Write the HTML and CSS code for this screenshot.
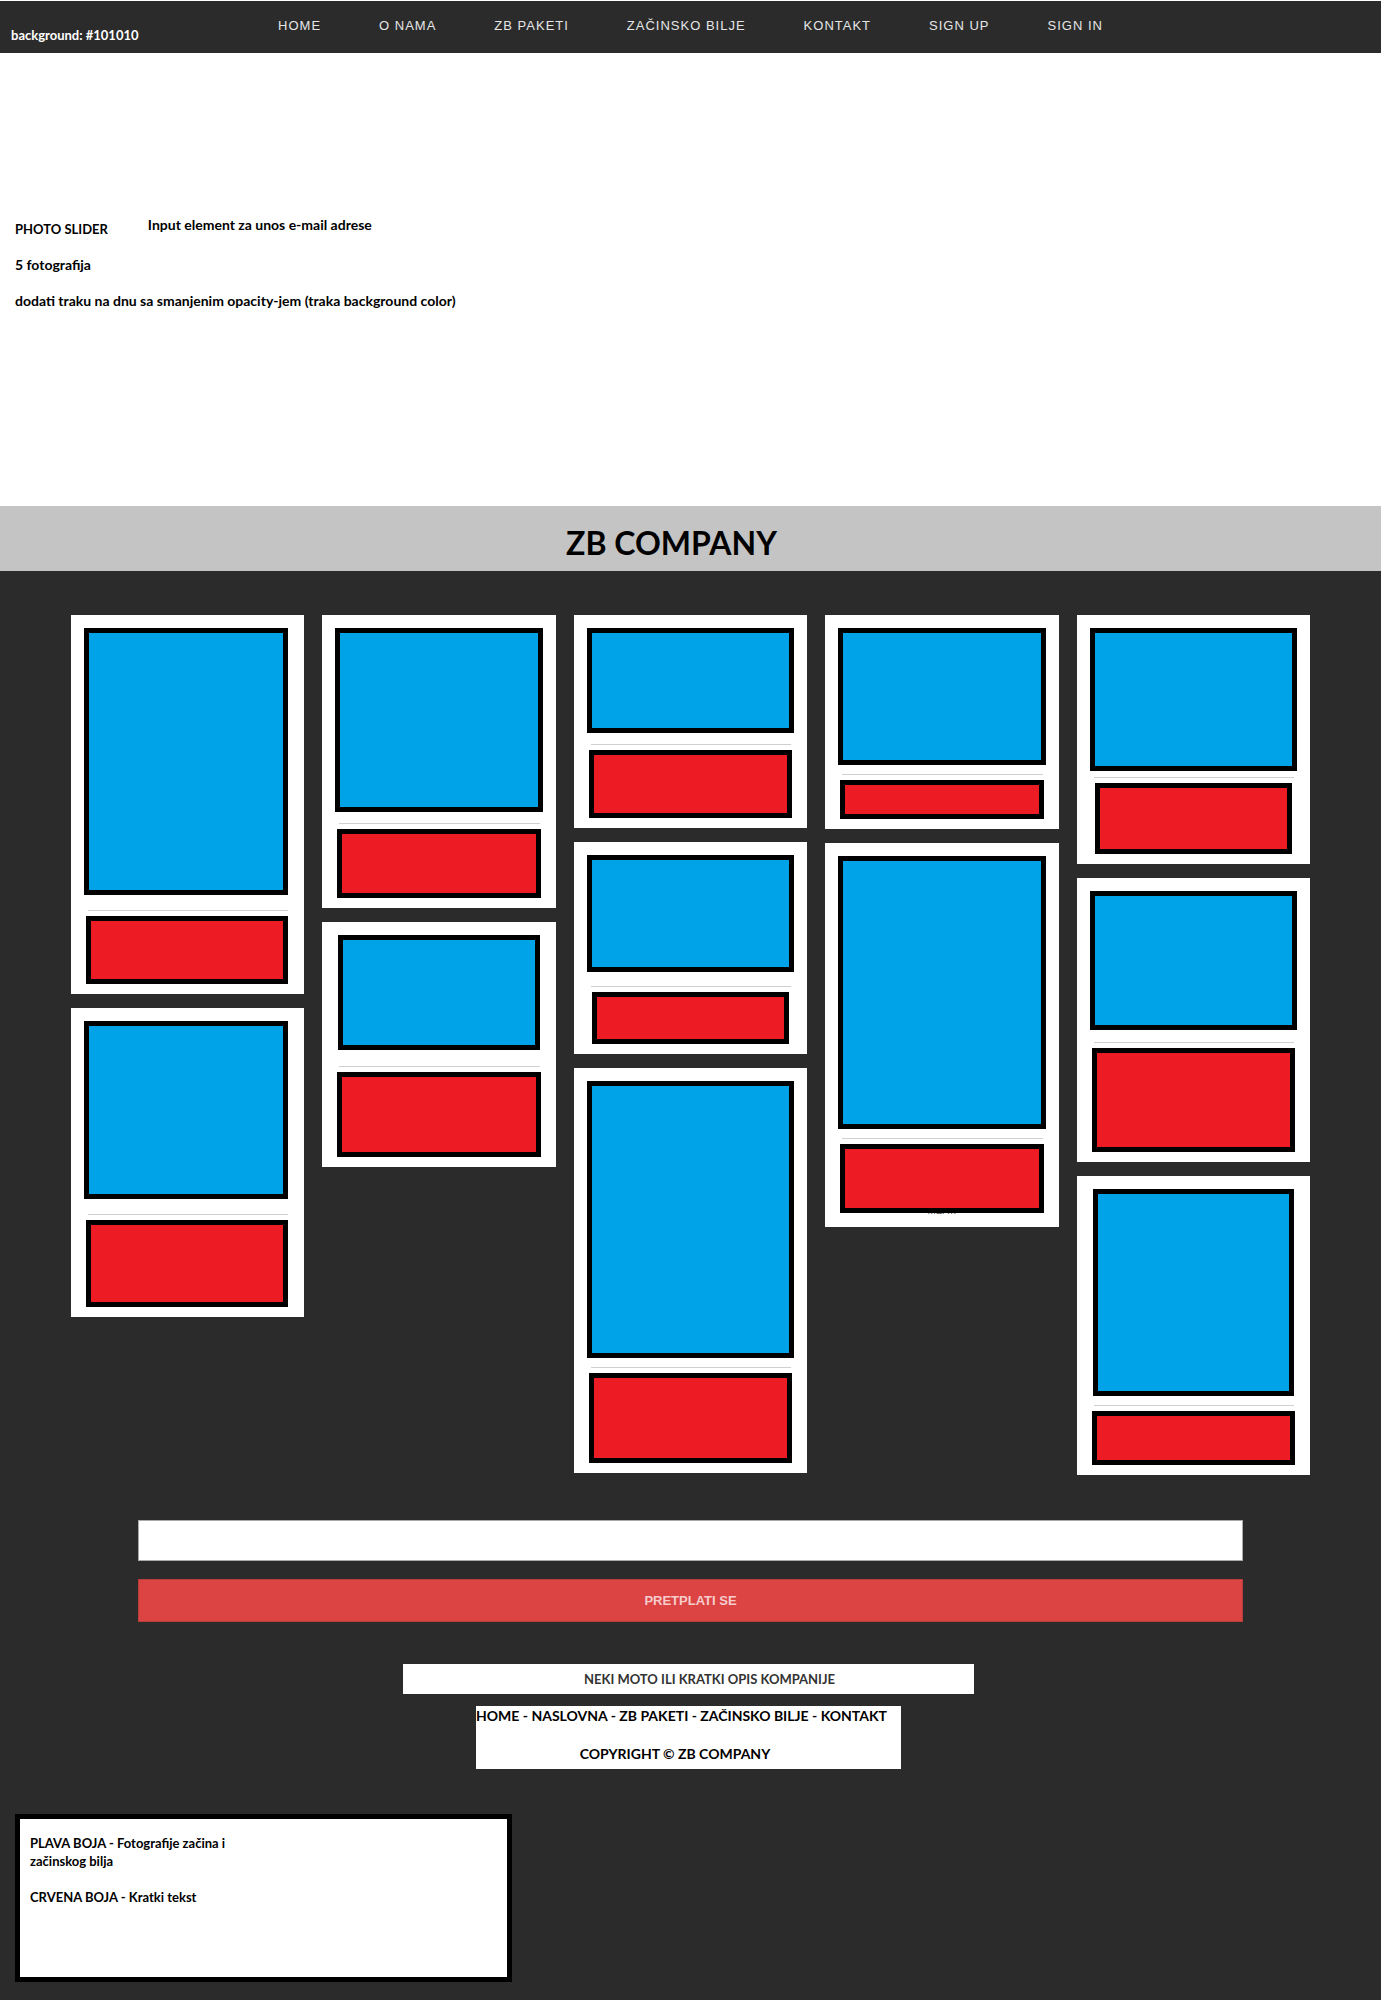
FILE: index.html
```html
<!DOCTYPE html>
<html lang="hr">
<head>
  <meta charset="utf-8">
  <meta name="viewport" content="width=device-width, initial-scale=1">
  <title>ZB Company</title>
  <link rel="stylesheet" href="styles.css">
</head>
<body>
  <header class="topbar">
    <p class="topbar-note">background: #101010</p>
    <nav class="topnav">
      <a href="#home">HOME</a>
      <a href="#o-nama">O NAMA</a>
      <a href="#paketi">ZB PAKETI</a>
      <a href="#bilje">ZAČINSKO BILJE</a>
      <a href="#kontakt">KONTAKT</a>
      <a href="#sign-up">SIGN UP</a>
      <a href="#sign-in">SIGN IN</a>
    </nav>
  </header>

  <main>
    <section class="slider">
      <div class="slider-head">
        <p class="slider-name">PHOTO SLIDER</p>
        <label class="email-label" for="email">Input element za unos e-mail adrese</label>
      </div>
      <p>5 fotografija</p>
      <p>dodati traku na dnu sa smanjenim opacity-jem (traka background color)</p>
    </section>

    <h1 class="title">ZB COMPANY</h1>

    <section class="gallery">
      <div class="column column-first">
        <article class="card" style="--card: 379px; --photo: 267px; --text: 68px"><div class="photo"></div><hr><div class="text"></div></article>
        <article class="card" style="--card: 309px; --photo: 178px; --text: 87px"><div class="photo"></div><hr><div class="text"></div></article>
      </div>
      <div class="column">
        <article class="card" style="--card: 293px; --photo: 184px; --text: 69px"><div class="photo"></div><hr><div class="text"></div></article>
        <article class="card" style="--card: 245px; --photo: 115px; --text: 85px"><div class="photo narrow"></div><hr><div class="text"></div></article>
      </div>
      <div class="column">
        <article class="card" style="--card: 213px; --photo: 105px; --text: 68px"><div class="photo"></div><hr><div class="text"></div></article>
        <article class="card" style="--card: 212px; --photo: 117px; --text: 52px"><div class="photo"></div><hr><div class="text narrow"></div></article>
        <article class="card" style="--card: 405px; --photo: 277px; --text: 90px"><div class="photo"></div><hr><div class="text"></div></article>
      </div>
      <div class="column">
        <article class="card" style="--card: 214px; --photo: 137px; --text: 39px"><div class="photo"></div><hr><div class="text"></div></article>
        <article class="card" style="--card: 384px; --photo: 273px; --text: 69px"><div class="photo"></div><hr><div class="text"></div><p class="caption">MEAT.</p></article>
      </div>
      <div class="column">
        <article class="card" style="--card: 249px; --photo: 143px; --text: 71px"><div class="photo"></div><hr><div class="text narrow"></div></article>
        <article class="card" style="--card: 284px; --photo: 139px; --text: 104px"><div class="photo"></div><hr><div class="text"></div></article>
        <article class="card" style="--card: 299px; --photo: 207px; --text: 54px"><div class="photo narrow"></div><hr><div class="text"></div></article>
      </div>
    </section>

    <form class="subscribe">
      <input id="email" type="email" name="email">
      <button type="button">PRETPLATI SE</button>
    </form>
  </main>

  <footer class="footer">
    <p class="motto">NEKI MOTO ILI KRATKI OPIS KOMPANIJE</p>
    <div class="footer-box">
      <nav class="footer-nav"><a href="#home">HOME</a> - <a href="#naslovna">NASLOVNA</a> - <a href="#paketi">ZB PAKETI</a> - <a href="#bilje">ZAČINSKO BILJE</a> - <a href="#kontakt">KONTAKT</a></nav>
      <p class="copyright">COPYRIGHT © ZB COMPANY</p>
    </div>
    <aside class="legend">
      <p>PLAVA BOJA - Fotografije začina i začinskog bilja</p>
      <p>CRVENA BOJA - Kratki tekst</p>
    </aside>
  </footer>
</body>
</html>
```
FILE: styles.css
```css
* {
  box-sizing: border-box;
}

body {
  margin: 0;
  background: #2b2b2b;
  color: #000;
  font: bold 13px/18px Lato, "Open Sans", sans-serif;
}

p,
h1 {
  margin: 0;
}

a {
  color: inherit;
  text-decoration: none;
}

.topbar {
  display: grid;
  grid-template-columns: 1fr auto 1fr;
  min-height: 53px;
  padding-left: 11px;
  padding-right: 11px;
  border-top: 1px solid #fff;
}

.topbar-note {
  align-self: end;
  padding-bottom: 9px;
  color: #fff;
}

.topnav {
  display: flex;
  gap: 58px;
  padding-top: 16px;
  color: #e6e6e6;
  font-family: "Liberation Sans", Arial, sans-serif;
  font-weight: normal;
  letter-spacing: 1px;
}

.slider {
  display: flex;
  flex-direction: column;
  gap: 18px;
  min-height: 453px;
  padding: 167px 15px 0;
  background: #fff;
  font-size: 14px;
}

.slider-head {
  display: flex;
  gap: 40px;
}

.slider-name {
  font-size: 13px;
}

.email-label {
  margin-top: -4px;
}

.title {
  padding: 17px 38px 8px 0;
  background: #c4c4c4;
  font-size: 32px;
  line-height: 40px;
  text-align: center;
}

.gallery {
  display: grid;
  grid-template-columns: repeat(5, 1fr);
  align-items: start;
  gap: 18px;
  padding: 44px 71px 45px;
}

.column {
  display: flex;
  flex-direction: column;
  gap: 14px;
}

.card {
  display: flex;
  flex-direction: column;
  min-height: var(--card);
  padding: 13px 0 10px;
  background: #fff;
}

.photo,
.text {
  border: 5px solid #000;
}

.photo {
  height: var(--photo);
  margin: 0 13px;
  background: #00a2e8;
}

.text {
  position: relative;
  height: var(--text);
  margin: 0 15px;
  background: #ed1c24;
}

.column-first .photo,
.column-first .text {
  margin-right: 16px;
}

.photo.narrow {
  margin: 0 16px;
}

.text.narrow {
  margin: 0 18px;
}

.card hr {
  width: calc(100% - 33px);
  height: 1px;
  margin: auto 16px 5px 17px;
  border: 0;
  background: #d0d0d0;
}

/* The caption sits mostly behind the text block above it. */
.caption {
  height: 12px;
  margin-top: -8px;
  color: #555;
  font: 10px/12px "Liberation Sans", Arial, sans-serif;
  text-align: center;
}

.subscribe {
  display: grid;
  gap: 18px;
  width: 80%;
  margin: 0 auto;
}

.subscribe input {
  width: 100%;
  height: 41px;
  padding: 0 12px;
  border: 1px solid #aaa;
  background: #fff;
}

.subscribe button {
  height: 43px;
  padding: 0;
  border: 1px solid #b83c3c;
  background: #dc4444;
  color: #f6cccc;
  font: bold 13px/18px "Liberation Sans", Arial, sans-serif;
}

.footer {
  display: flex;
  flex-direction: column;
  align-items: center;
  padding: 42px 19px 18px 15px;
}

.motto {
  width: 571px;
  max-width: 100%;
  padding: 6px 0 6px 42px;
  background: #fff;
  color: #333;
  text-align: center;
}

.footer-box {
  width: 425px;
  max-width: 100%;
  margin-top: 12px;
  padding: 1px 0 6px;
  background: #fff;
  font-size: 14px;
}

.copyright {
  padding: 20px 27px 0 0;
  text-align: center;
}

.legend {
  display: flex;
  flex-direction: column;
  align-self: flex-start;
  gap: 18px;
  width: 497px;
  max-width: 100%;
  min-height: 168px;
  margin-top: 45px;
  padding: 15px 10px;
  border: 5px solid #000;
  background: #fff;
}

.legend p {
  max-width: 216px;
}
```
